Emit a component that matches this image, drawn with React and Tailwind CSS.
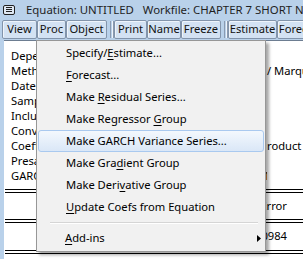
import React from "react";

const FONT = { fontFamily: '"Noto Sans", "Liberation Sans", sans-serif' };

const toolbar = [
  ["View", "w-[35px]"],
  ["Proc", "w-[29px]"],
  ["Object", "w-[41px]"],
  "sep",
  ["Print", "w-[33px]"],
  ["Name", "w-[34px]"],
  ["Freeze", "w-[40px]"],
  "sep",
  ["Estimate", "w-[49px]"],
  ["Forecast", "w-[48px]"],
];

// mnemonic letter shown underlined
const menuItems = [
  ["Specify/", "E", "stimate..."],
  ["", "F", "orecast..."],
  ["Make ", "R", "esidual Series..."],
  ["Make Regressor ", "G", "roup"],
  ["Make GARCH Variance Series...", "", ""],
  ["Make Gra", "d", "ient Group"],
  ["Make Deri", "v", "ative Group"],
  ["", "U", "pdate Coefs from Equation"],
];

const outputLines = [
  ["Dependent Variable: RETURN", ""],
  ["Method: ML ARCH - Normal distribution (BFGS", "/ Marquardt steps)"],
  ["Date: 05/14/19   Time: 10:32", ""],
  ["Sample (adjusted): 2 1000", ""],
  ["Included observations: 999 after adjustments", ""],
  ["Convergence achieved after 12 iterations", ""],
  ["Coefficient covariance computed using outer p", "roduct of gradients"],
  ["Presample variance: backcast (parameter = 0.7)", ""],
  ["GARCH = C(2) + C(3)*RESID(-1)^2 + C(4)*GARCH(-1)", ""],
];

function DoubleLine() {
  return (
    <div className="ml-[1px] flex flex-col gap-[2px]">
      <div className="h-px bg-black" />
      <div className="h-px bg-black" />
    </div>
  );
}

export default function App() {
  return (
    <div className="w-[303px] h-[259px] overflow-hidden bg-[#b9d1ea] text-[11.2px] text-black relative" style={FONT}>
      {/* title bar */}
      <div className="h-[19px] flex items-center whitespace-nowrap">
        <div className="ml-[3px] w-[12px] h-[10px] shrink-0 border border-[#222] rounded-[2px] flex flex-col justify-center items-center gap-[1px] bg-[#dfe8f3]">
          <div className="w-[6px] h-px bg-[#222]" />
          <div className="w-[6px] h-px bg-[#222]" />
          <div className="w-[6px] h-px bg-[#222]" />
        </div>
        <span className="ml-[11px] text-[11.4px] text-[#1e1e1e] whitespace-pre">
          Equation: UNTITLED   Workfile: CHAPTER 7 SHORT NOTES::Untitled\
        </span>
      </div>

      {/* toolbar */}
      <div className="h-[21px] flex items-start pl-[2px] pt-[1px] whitespace-nowrap">
        {toolbar.map((b, i) =>
          b === "sep" ? (
            <div key={i} className="h-[19px] w-[7px] shrink-0 flex pl-[3px] gap-[1px] pt-[1px]">
              <div className="w-px h-[17px] bg-[#8a9ab0]" />
              <div className="w-px h-[17px] bg-[#eef4fb]" />
              <div className="w-px h-[17px] bg-[#8a9ab0]" />
            </div>
          ) : (
            <div
              key={i}
              className={`${b[1]} h-[19px] shrink-0 flex items-center justify-center rounded-[2px] border border-[#8294ab] bg-[#d3e2f3] shadow-[inset_1px_1px_0_#eef4fb] text-[#111]`}
            >
              {b[0]}
            </div>
          )
        )}
      </div>

      {/* output area */}
      <div className="absolute left-[4px] top-[40px] right-0 bottom-0 bg-white border-t border-[#6d7d91] overflow-hidden whitespace-nowrap">
        <div className="pt-[7px] pl-[7px] leading-[15px]">
          {outputLines.map((l, i) => (
            <div key={i} className="flex">
              <span className="w-[256px] overflow-hidden shrink-0">{l[0]}</span>
              <span>{l[1]}</span>
            </div>
          ))}
        </div>
        <div className="mt-[6px]">
          <DoubleLine />
          <div className="h-[26px] flex items-center">
            <span className="w-[283px] text-right whitespace-pre">Variable    Coefficient    Std. Error</span>
          </div>
          <DoubleLine />
          <div className="h-[27px] flex items-center">
            <span className="w-[283px] text-right whitespace-pre">C    0.000512    0.000984</span>
          </div>
          <DoubleLine />
        </div>
      </div>

      {/* Proc dropdown menu */}
      <div className="absolute left-[36px] top-[40px] w-[230px] pb-[2px] pt-[1px] bg-[#f1f1f1] border border-[#979797] shadow-[3px_3px_3px_rgba(0,0,0,0.35)] whitespace-nowrap">
        {menuItems.map((m, i) => (
          <div
            key={i}
            className={`h-[22px] flex items-center pl-[27px] mx-[1px] rounded-[3px] ${
              i === 4
                ? "border border-[#a9c9ef] bg-gradient-to-b from-[#f3f8fd] to-[#dae7f7]"
                : "border border-transparent"
            }`}
          >
            <span className="whitespace-pre">
              {m[0]}
              {m[1] && <u className="underline-offset-[2px]">{m[1]}</u>}
              {m[2]}
            </span>
          </div>
        ))}
        <div className="h-[9px] flex items-center pl-[13px] pr-[7px]">
          <div className="w-full h-[2px] border-t border-[#d5d5d5] border-b border-b-white" />
        </div>
        <div className="h-[22px] flex items-center justify-between pl-[28px] pr-[4px]">
          <span>
            <u className="underline-offset-[2px]">A</u>dd-ins
          </span>
          <svg width="4" height="7" viewBox="0 0 4 7">
            <path d="M0 0 L4 3.5 L0 7 Z" fill="#000" />
          </svg>
        </div>
      </div>
    </div>
  );
}
